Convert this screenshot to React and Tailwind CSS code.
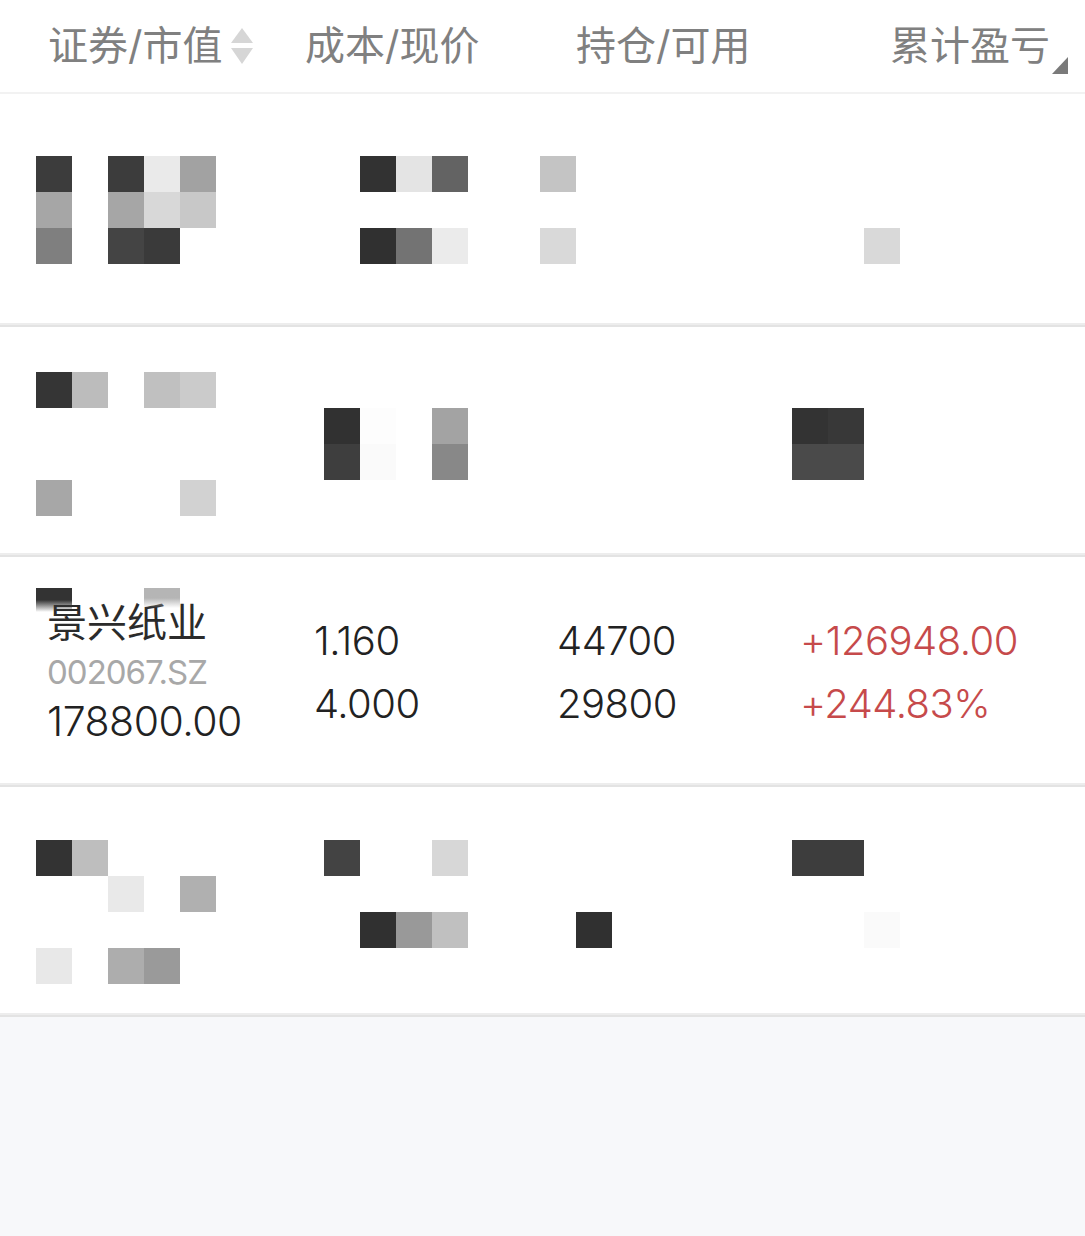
const font = "font-['Inter','Noto_Sans_CJK_SC',sans-serif]";

// pixelated (mosaic) rows: [column, colour class], column n sits at x = 36 * n
const blurredRows = [
  {
    h: "h-[229px]",
    pt: "pt-[62px]",
    lines: [
      [[1, "bg-[#3c3c3c]"], [3, "bg-[#3c3c3c]"], [4, "bg-[#eaeaea]"], [5, "bg-[#a2a2a2]"], [10, "bg-[#323232]"], [11, "bg-[#e4e4e4]"], [12, "bg-[#636363]"], [15, "bg-[#c4c4c4]"]],
      [[1, "bg-[#a6a6a6]"], [3, "bg-[#a6a6a6]"], [4, "bg-[#d8d8d8]"], [5, "bg-[#c8c8c8]"]],
      [[1, "bg-[#7f7f7f]"], [3, "bg-[#444444]"], [4, "bg-[#3a3a3a]"], [10, "bg-[#303030]"], [11, "bg-[#737373]"], [12, "bg-[#ebebeb]"], [15, "bg-[#d9d9d9]"], [24, "bg-[#d9d9d9]"]],
    ],
  },
  {
    h: "h-[226px]",
    pt: "pt-[45px]",
    lines: [
      [[1, "bg-[#353535]"], [2, "bg-[#bcbcbc]"], [4, "bg-[#c0c0c0]"], [5, "bg-[#cbcbcb]"]],
      [[9, "bg-[#313131]"], [10, "bg-[#fdfdfd]"], [12, "bg-[#a3a3a3]"], [22, "bg-[#333333]"], [23, "bg-[#383838]"]],
      [[9, "bg-[#3e3e3e]"], [10, "bg-[#fafafa]"], [12, "bg-[#888888]"], [22, "bg-[#4a4a4a]"], [23, "bg-[#4a4a4a]"]],
      [[1, "bg-[#a7a7a7]"], [5, "bg-[#d2d2d2]"]],
    ],
  },
];

const lastRow = {
  h: "h-[226px]",
  pt: "pt-[53px]",
  lines: [
    [[1, "bg-[#333333]"], [2, "bg-[#bebebe]"], [9, "bg-[#434343]"], [12, "bg-[#d7d7d7]"], [22, "bg-[#3d3d3d]"], [23, "bg-[#3d3d3d]"]],
    [[3, "bg-[#e9e9e9]"], [5, "bg-[#b0b0b0]"]],
    [[10, "bg-[#303030]"], [11, "bg-[#999999]"], [12, "bg-[#c0c0c0]"], [16, "bg-[#303030]"], [24, "bg-[#fafafa]"]],
    [[1, "bg-[#e8e8e8]"], [3, "bg-[#adadad]"], [4, "bg-[#9a9a9a]"]],
  ],
};

function MosaicLine({ cells }) {
  const max = Math.max(...cells.map((c) => c[0]));
  const slots = [];
  for (let i = 1; i <= max; i++) {
    const hit = cells.find((c) => c[0] === i);
    slots.push(<div key={i} className={`w-[36px] h-[36px] shrink-0 ${hit ? hit[1] : ""}`} />);
  }
  return <div className="flex h-[36px] pl-[36px]">{slots}</div>;
}

function MosaicRow({ row }) {
  return (
    <>
      <div className={`bg-white ${row.h} ${row.pt}`}>
        {row.lines.map((cells, i) => (
          <MosaicLine key={i} cells={cells} />
        ))}
      </div>
      <Divider />
    </>
  );
}

function Divider() {
  return (
    <div className="h-[4px] flex flex-col">
      <div className="h-[2px] bg-[#ededed]" />
      <div className="h-[2px] bg-[#e3e3e3]" />
    </div>
  );
}

function SortIcon() {
  return (
    <svg width="22" height="36" viewBox="0 0 22 36" className="ml-[9px]">
      <path d="M11 0 L22 15 L0 15 Z" fill="#d6d6d6" />
      <path d="M0 20 L22 20 L11 36 Z" fill="#d6d6d6" />
    </svg>
  );
}

function CornerMark() {
  return (
    <svg width="16" height="17" viewBox="0 0 16 17" className="self-end mb-[18px] ml-[2px]">
      <path d="M16 0 L16 17 L0 17 Z" fill="#7a7a7a" />
    </svg>
  );
}

export default function App() {
  return (
    <div className={`min-h-screen bg-[#f7f8fa] ${font}`}>
      <div className="flex items-center h-[92px] bg-white text-[40px] text-[#808080]">
        <div className="w-[305px] pl-[48px] flex items-center">
          <span>证券/市值</span>
          <SortIcon />
        </div>
        <div className="w-[271px]">成本/现价</div>
        <div className="flex-1">持仓/可用</div>
        <div className="flex h-full items-center pr-[17px]">
          <span>累计盈亏</span>
          <CornerMark />
        </div>
      </div>
      <div className="h-[2px] bg-[#f2f2f2]" />

      {blurredRows.map((row, i) => (
        <MosaicRow key={i} row={row} />
      ))}

      <div className="relative flex items-center h-[226px] bg-white pt-[4px]">
        <div className="w-[314px] pl-[47px] flex flex-col">
          <span className="text-[40px] leading-[50px] text-[#2b2b2b]">景兴纸业</span>
          <span className="text-[33px] leading-[48px] tracking-[-1px] text-[#a8a8a8]">002067.SZ</span>
          <span className="text-[41px] leading-[50px] tracking-[-0.5px] font-light text-[#222222]">178800.00</span>
        </div>
        <div className="w-[243px] flex flex-col text-[40px] leading-[63px] tracking-[-0.5px] font-light text-[#222222]">
          <span>1.160</span>
          <span>4.000</span>
        </div>
        <div className="w-[243px] flex flex-col text-[40px] leading-[63px] tracking-[-0.5px] font-light text-[#222222]">
          <span>44700</span>
          <span>29800</span>
        </div>
        <div className="flex-1 flex flex-col text-[40px] leading-[63px] tracking-[-0.5px] font-light text-[#c64a4b]">
          <span>+126948.00</span>
          <span>+244.83%</span>
        </div>
        <div className="absolute left-[36px] top-[31px] w-[36px] h-[24px] bg-gradient-to-b from-[#333333] via-[#333333] to-transparent" />
        <div className="absolute left-[144px] top-[31px] w-[36px] h-[20px] bg-gradient-to-b from-[#b5b5b5] via-[#b5b5b5] to-transparent" />
      </div>
      <Divider />

      <MosaicRow row={lastRow} />
    </div>
  );
}
